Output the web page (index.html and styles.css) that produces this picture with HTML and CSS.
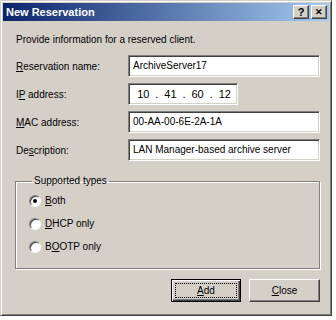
FILE: index.html
```html
<!DOCTYPE html>
<html lang="en">
<head>
    <meta charset="UTF-8">
    <title>New Reservation</title>
    <link rel="stylesheet" href="styles.css">
</head>
<body>
    <div class="window">
        <div class="titlebar">
            <span class="title">New Reservation</span>
            <div class="caption-buttons">
                <span class="cap-btn">?</span>
                <span class="cap-btn close-x">&#x2715;</span>
            </div>
        </div>
        <div class="content">
            <p class="intro">Provide information for a reserved client.</p>
            <div class="form">
                <label class="row-label"><u>R</u>eservation name:</label>
                <div class="field">ArchiveServer17</div>

                <label class="row-label">I<u>P</u> address:</label>
                <div class="field ip">
                    <span class="seg">10</span><span class="dot">.</span><span class="seg">41</span><span class="dot">.</span><span class="seg">60</span><span class="dot">.</span><span class="seg">12</span>
                </div>

                <label class="row-label"><u>M</u>AC address:</label>
                <div class="field">00-AA-00-6E-2A-1A</div>

                <label class="row-label">De<u>s</u>cription:</label>
                <div class="field">LAN Manager-based archive server</div>
            </div>

            <fieldset class="group">
                <legend>Supported types</legend>
                <div class="radio"><span class="circle checked"></span><u>B</u>oth</div>
                <div class="radio"><span class="circle"></span><u>D</u>HCP only</div>
                <div class="radio"><span class="circle"></span>B<u>O</u>OTP only</div>
            </fieldset>

            <div class="buttons">
                <button class="btn default"><span class="focus"><u>A</u>dd</span></button>
                <button class="btn"><u>C</u>lose</button>
            </div>
        </div>
    </div>
</body>
</html>
```

FILE: styles.css
```css
body {
    margin: 0;
    background: #fff;
    font-family: 'Liberation Sans', Arial, sans-serif;
    font-size: 10px;
    color: #000;
}

.window {
    width: 332px;
    height: 316px;
    box-sizing: border-box;
    background: #d4d0c8;
    border: 1px solid;
    border-color: #d4d0c8 #404040 #404040 #d4d0c8;
    box-shadow: inset 1px 1px #fff, inset -1px -1px #808080;
    padding: 2px;
    display: flex;
    flex-direction: column;
}

.titlebar {
    height: 18px;
    background: linear-gradient(to right, #0a246a, #a6caf0);
    display: flex;
    align-items: center;
    justify-content: space-between;
    padding: 0 2px 0 3px;
}

.title {
    color: #fff;
    font-weight: bold;
    font-size: 11px;
}

.caption-buttons {
    display: flex;
    gap: 2px;
}

.cap-btn {
    width: 16px;
    height: 14px;
    box-sizing: border-box;
    background: #d4d0c8;
    border: 1px solid;
    border-color: #fff #404040 #404040 #fff;
    box-shadow: inset -1px -1px #808080;
    font-weight: bold;
    font-size: 11px;
    line-height: 12px;
    text-align: center;
}

.close-x {
    font-size: 9px;
}

.content {
    padding: 0 9px 0 12px;
    flex: 1;
}

.intro {
    margin: 12px 0 0 1px;
    line-height: 13px;
}

.form {
    display: grid;
    grid-template-columns: 113px 1fr;
    grid-auto-rows: 22px;
    row-gap: 6px;
    margin-top: 9px;
    align-items: center;
}

.row-label {
    padding-left: 1px;
}

.field {
    height: 22px;
    box-sizing: border-box;
    background: #fff;
    border: 1px solid;
    border-color: #808080 #fff #fff #808080;
    box-shadow: inset 1px 1px #404040, inset -1px -1px #d4d0c8;
    padding: 0 4px 0 4px;
    line-height: 20px;
    white-space: nowrap;
    overflow: hidden;
}

.field.ip {
    width: 110px;
    display: flex;
    padding-left: 6px;
    font-size: 11px;
}

.seg {
    width: 17px;
    text-align: center;
}

.dot {
    width: 11px;
    text-align: center;
}

.group {
    margin: 14px 0 0 0;
    padding: 2px 0 10px 13px;
    border: 1px solid #808080;
    box-shadow: inset 1px 1px #fff, 1px 1px #fff;
    min-inline-size: 0;
}

.group legend {
    padding: 0 2px;
    margin-left: 3px;
    line-height: 12px;
}

.radio {
    display: flex;
    align-items: center;
    height: 23px;
}

.circle {
    width: 10px;
    height: 10px;
    border-radius: 50%;
    background: #fff;
    border: 1px solid;
    border-color: #808080 #fff #fff #808080;
    box-shadow: inset 1px 1px #404040;
    margin-right: 4px;
    display: flex;
    align-items: center;
    justify-content: center;
}

.circle.checked::after {
    content: "";
    width: 4px;
    height: 4px;
    border-radius: 50%;
    background: #000;
}

.buttons {
    display: flex;
    justify-content: flex-end;
    gap: 8px;
    margin-top: 10px;
}

.btn {
    width: 71px;
    height: 23px;
    background: #d4d0c8;
    border: 1px solid;
    border-color: #fff #404040 #404040 #fff;
    box-shadow: inset -1px -1px #808080;
    font-family: inherit;
    font-size: 10px;
    padding: 0;
    color: #000;
}

.btn.default {
    width: 70px;
    border: 1px solid #000;
    box-shadow: inset 1px 1px #fff, inset -1px -1px #404040, inset -2px -2px #808080;
    padding: 3px;
}

.btn .focus {
    display: block;
    height: 100%;
    box-sizing: border-box;
    border: 1px dotted #000;
    line-height: 13px;
}
```
